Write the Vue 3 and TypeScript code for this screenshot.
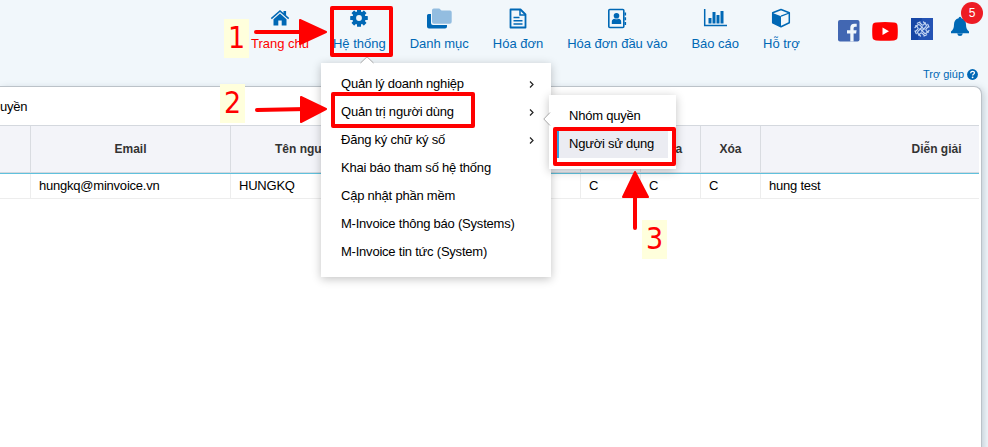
<script setup lang="ts">
interface NavItem { label: string; icon: string; active?: boolean }
const nav: NavItem[] = [
  { label: 'Trang chủ', icon: 'home', active: true },
  { label: 'Hệ thống', icon: 'gear' },
  { label: 'Danh mục', icon: 'folder' },
  { label: 'Hóa đơn', icon: 'file' },
  { label: 'Hóa đơn đầu vào', icon: 'contact' },
  { label: 'Báo cáo', icon: 'chart' },
  { label: 'Hỗ trợ', icon: 'box' },
]
const menu: { label: string; sub?: boolean }[] = [
  { label: 'Quản lý doanh nghiệp', sub: true },
  { label: 'Quản trị người dùng', sub: true },
  { label: 'Đăng ký chữ ký số', sub: true },
  { label: 'Khai báo tham số hệ thống' },
  { label: 'Cập nhật phần mềm' },
  { label: 'M-Invoice thông báo (Systems)' },
  { label: 'M-Invoice tin tức (System)' },
]
const columns: string[] = ['', 'Email', 'Tên người', '', 'Sửa', 'Xóa', 'Diễn giải']
const cells: string[] = ['', 'hungkq@minvoice.vn', 'HUNGKQ', 'C', 'C', 'C', 'hung test']
const teeth: number[] = [0, 45, 90, 135, 180, 225, 270, 315]
const quarters: number[] = [0, 90, 180, 270]
</script>

<template>
  <div class="page">
    <header class="top">
      <nav class="nav">
        <a v-for="item in nav" :key="item.label" class="nav-item" :class="{ active: item.active }">
          <svg v-if="item.icon === 'home'" class="ico" width="20" height="20" viewBox="0 0 20 20">
            <path d="M10 2 .8 10l1 1.200L10 4.100l8.200 7.100 1-1.200-3.100-2.700V3.100h-2.600V5zM10 5.500l-6.500 5.700v6.300h4.800V12.500h3.400v5h4.800v-6.300z" fill="#0068b5" />
          </svg>
          <svg v-else-if="item.icon === 'gear'" class="ico" width="20" height="20" viewBox="0 0 20 20">
            <rect v-for="a in teeth" :key="a" x="8" y="1.200" width="4" height="4.600" rx=".6" fill="#0068b5" :transform="`rotate(${a} 10 10)`" />
            <circle cx="10" cy="10" r="4.800" fill="none" stroke="#0068b5" stroke-width="3.800" />
          </svg>
          <svg v-else-if="item.icon === 'folder'" class="ico" width="26" height="22" viewBox="0 0 26 22">
            <path d="M1 7.500Q1 6 2.500 6h2.500v9Q5 17 7 17H21v1.500q0 2-2 2H3q-2 0-2-2z" fill="#0068b5" />
            <path d="M6 2.300Q6 .5 7.800.5h5.500l2.200 2H24q1.700 0 1.700 1.700v9.500q0 2-2 2H8q-2 0-2-2z" fill="#93bde0" />
          </svg>
          <svg v-else-if="item.icon === 'file'" class="ico" width="20" height="22" viewBox="0 0 20 22" fill="none" stroke="#0068b5">
            <path d="M2.500 1.500h10l5 5v13H2.500z" stroke-width="1.800" stroke-linejoin="round" />
            <path d="M12 2v5h5" stroke-width="1.500" />
            <path d="M5.500 9.500h6M5.500 12.700h9M5.500 16h9" stroke-width="1.600" />
          </svg>
          <svg v-else-if="item.icon === 'contact'" class="ico" width="20" height="22" viewBox="0 0 20 22">
            <rect x="1.800" y="1.500" width="15" height="18" rx="1" fill="none" stroke="#0068b5" stroke-width="1.600" />
            <path d="M18.300 4.500v3M18.300 9.200v3M18.300 14v3" stroke="#0068b5" stroke-width="1.600" />
            <circle cx="9.500" cy="7.700" r="2.800" fill="#0068b5" />
            <path d="M4.800 16v-2.300q0-2.600 2.900-2.900 1.800 1 3.600 0 2.900.3 2.900 2.900V16z" fill="#0068b5" />
          </svg>
          <svg v-else-if="item.icon === 'chart'" class="ico" width="24" height="20" viewBox="0 0 24 20">
            <path d="M1.700 1v16.400H24" fill="none" stroke="#0068b5" stroke-width="1.500" />
            <path d="M5.500 10h3v5.500h-3zM9.500 4h3v11.500h-3zM13.500 7h3v8.500h-3zM17.500 3h3v12.500h-3z" fill="#0068b5" />
          </svg>
          <svg v-else class="ico" width="20" height="20" viewBox="0 0 20 20">
            <path d="m10 1.500 8.300 3.300v10L10 18.700 1.700 14.800v-10z" fill="#f1f7fb" stroke="#0068b5" stroke-width="1.500" stroke-linejoin="round" />
            <path d="m1.700 5 8.300 3.200v10.500l-8.300-3.900z" fill="#0068b5" />
            <path d="m10 8.200 8.300-3.200" stroke="#0068b5" stroke-width="1.300" />
          </svg>
          <span>{{ item.label }}</span>
        </a>
      </nav>
      <div class="side">
        <div class="social">
          <svg width="22" height="22" viewBox="0 0 22 22">
            <rect width="21.500" height="21.500" rx="2" fill="#4267b2" />
            <path d="M12.300 21.500v-8H9v-3.200h3.300V7.700q0-4 4-4h2.400v3h-1.700q-1.400 0-1.400 1.500v2.100h3l-.5 3.200h-2.500v8z" fill="#f1f7fb" />
          </svg>
          <svg class="yt" width="26" height="19" viewBox="0 0 26 19">
            <path d="M4 .5Q13-.4 22 .5q3.200.2 3.500 3 .6 6 0 12-.3 2.600-3.500 2.900-9 .7-18 0-3.200-.3-3.500-2.900-.6-6 0-12 .3-2.800 3.500-3z" fill="#f00" />
            <path d="m10.500 5.500 6.500 3.700-6.500 3.800z" fill="#fff" />
          </svg>
          <svg class="knot" width="22" height="22" viewBox="0 0 22 22">
            <rect width="22" height="22" fill="#1747a6" />
            <path d="M11 0h11v22H7z" fill="#2453b4" />
            <g fill="none" stroke="#c5d7f3" stroke-width="1.200" stroke-linecap="round">
              <g v-for="a in quarters" :key="a" :transform="`rotate(${a} 11 11)`">
                <path d="M4 9.500 6.500 7q1.200-1 2.400.2L13 11.300M8.500 4.500 10.700 6.700q1 1 2 0l1.600-1.900M6.300 5.300 9 4" />
              </g>
            </g>
          </svg>
          <div class="bell">
            <svg width="20" height="21" viewBox="0 0 20 21">
              <path d="M10 .8q1.300 0 1.400 1.500 4.600 1.200 4.600 6.200 0 5 3 7v1.700H1v-1.700q3-2 3-7 0-5 4.600-6.200Q8.700.8 10 .8zM7.200 17.500h5.600q-.4 2.500-2.800 2.500t-2.800-2.500z" fill="#0068b5" />
            </svg>
            <span class="badge">5</span>
          </div>
        </div>
        <div class="help">
          <span>Trợ giúp</span>
          <svg width="11" height="11" viewBox="0 0 11 11">
            <circle cx="5.500" cy="5.500" r="5.400" fill="#0068b5" />
            <path d="M3.600 4.200q.2-1.900 2-1.900t1.900 1.500q0 .8-1 1.400-.8.500-.8 1.200" fill="none" stroke="#fff" stroke-width="1.300" />
            <circle cx="5.600" cy="8.300" r=".9" fill="#fff" />
          </svg>
        </div>
      </div>
    </header>

    <main class="panel">
      <div class="title">uyền</div>
      <div class="table">
        <div class="row head">
          <div v-for="(c, i) in columns" :key="i" class="cell"><span>{{ c }}</span></div>
        </div>
        <div class="row data">
          <div v-for="(c, i) in cells" :key="i" class="cell">{{ c }}</div>
        </div>
      </div>
    </main>

    <div class="menu">
      <svg class="tip" width="14" height="8" viewBox="0 0 14 8"><path d="M.5 7.500 7 1l6.500 6.500z" fill="#fff" /><path d="M.5 7 7 .8 13.500 7" fill="none" stroke="#aaa" /></svg>
      <div v-for="m in menu" :key="m.label" class="menu-item">
        <span>{{ m.label }}</span>
        <svg v-if="m.sub" width="6" height="8" viewBox="0 0 6 8"><path d="m1 1.500 3 3-3 3" fill="none" stroke="#222" stroke-width="1.200" /></svg>
      </div>
    </div>
    <div class="submenu">
      <svg class="tip-left" width="8" height="14" viewBox="0 0 8 14"><path d="M7.500.5 1 7l6.500 6.500z" fill="#fff" /><path d="M7 .5.800 7 7 13.500" fill="none" stroke="#aaa" /></svg>
      <div class="sub-item">Nhóm quyền</div>
      <div class="sub-item selected">Người sử dụng</div>
    </div>

    <svg class="arrows" width="988" height="447" viewBox="0 0 988 447">
      <g fill="none" stroke="#f00" stroke-width="4" stroke-linejoin="round">
        <rect x="332" y="8" width="59" height="47" />
        <rect x="333" y="94" width="140" height="32" />
        <rect x="555" y="129" width="119" height="35" />
        <path d="M256 32h50M257 110l50-1M635 228v-40" stroke-linecap="round" />
      </g>
      <g fill="#f00" stroke="#f00" stroke-width="2" stroke-linejoin="round">
        <path d="m300 20 26 12-26 12zM301 97l25 12-25 13zM635 172l13 25h-25z" />
      </g>
    </svg>
    <div class="note n1">1</div>
    <div class="note n2">2</div>
    <div class="note n3">3</div>
  </div>
</template>

<style>
body { margin: 0; overflow: hidden; }
</style>

<style scoped>
.page { position: relative; width: 988px; height: 447px; overflow: hidden; box-sizing: border-box; background: #f1f7fb; color: #000; font: 13px/18px "Liberation Sans", Arial, sans-serif; display: flex; flex-direction: column; }
.top { height: 86px; flex: none; display: flex; justify-content: space-between; padding-left: 239px; }
.nav { display: flex; padding-top: 8px; }
.nav-item { display: flex; flex-direction: column; align-items: center; padding: 0 12px; color: #0068b5; white-space: nowrap; height: 45px; }
.nav-item span { margin-top: auto; letter-spacing: -.01px; }
.nav-item.active { color: #f00; }
.side { width: 150px; display: flex; flex-direction: column; justify-content: space-between; }
.social { display: flex; align-items: flex-start; padding-top: 20px; }
.yt { margin: 2px 12px 0 12px; }
.knot { margin-top: -2px; margin-left: 1px; }
.bell { position: relative; margin: -4px 0 0 17px; height: 21px; }
.badge { position: absolute; left: 11px; top: -14px; width: 22px; height: 22px; border-radius: 50%; background: #ed1c24; color: #fff; font-size: 12px; line-height: 22px; text-align: center; }
.help { display: flex; align-items: center; gap: 3px; justify-content: flex-end; padding: 0 10px 3px 0; color: #0068b5; font-size: 11px; }
.panel { width: 982px; box-sizing: border-box; height: 380px; flex: none; border: solid #bbc2c8; border-width: 1px 1px 0 0; border-radius: 0 8px 0 0; background: #fff; box-shadow: 2px 2px 7px rgba(90, 110, 125, .3); }
.title { height: 38px; line-height: 40px; letter-spacing: -.22px; }
.table { width: 979px; overflow: hidden; }
.row { display: grid; grid-template-columns: 30px 200px 350px 60px 60px 60px 352px; width: 1112px; }
.cell { border-left: 1px solid #d9dce1; box-sizing: border-box; }
.cell:first-child { border-left: 0; }
.head { height: 49px; box-sizing: border-box; background: #f3f4f9; border-top: 1px solid #d4d8de; border-bottom: 1px solid #5fc1dd; font-size: 12px; font-weight: 700; color: #333; }
.head .cell { text-align: center; line-height: 46px; border-bottom: 1px solid #d4d8de; }
.head .cell:nth-child(3) { text-align: left; padding-left: 44px; }
.data { height: 25px; line-height: 24px; border-bottom: 1px solid #ededed; box-sizing: border-box; letter-spacing: -.22px; }
.data .cell { border-color: #ededed; padding-left: 8px; }
.menu { position: absolute; left: 321px; top: 63px; width: 230px; height: 214px; box-sizing: border-box; padding: 7px 16px 0 20px; background: #fff; box-shadow: 0 2px 9px rgba(0, 0, 0, .24); letter-spacing: -.22px; }
.menu-item { height: 28px; display: flex; align-items: center; justify-content: space-between; white-space: nowrap; }
.tip { position: absolute; left: 39px; top: -7px; }
.submenu { position: absolute; left: 549px; top: 95px; width: 127px; height: 74px; box-sizing: border-box; padding: 7px 8px 0; background: #fff; box-shadow: 0 2px 9px rgba(0, 0, 0, .24); letter-spacing: -.23px; }
.sub-item { height: 28px; box-sizing: border-box; line-height: 27px; padding-left: 12px; white-space: nowrap; }
.sub-item.selected { background: #ebecf2; border-left: 2px solid #2e9fe0; padding-left: 10px; line-height: 28px; }
.tip-left { position: absolute; left: -6px; top: 17px; }
.arrows { position: absolute; left: 0; top: 0; }
.note { position: absolute; width: 25px; height: 39px; background: #ffffdc; color: #f00; font: 30px/38px "DejaVu Sans Condensed", "DejaVu Sans", sans-serif; text-align: center; }
.n1 { left: 224px; top: 19px; }
.n2 { left: 220px; top: 84px; }
.n3 { left: 642px; top: 220px; }
</style>
